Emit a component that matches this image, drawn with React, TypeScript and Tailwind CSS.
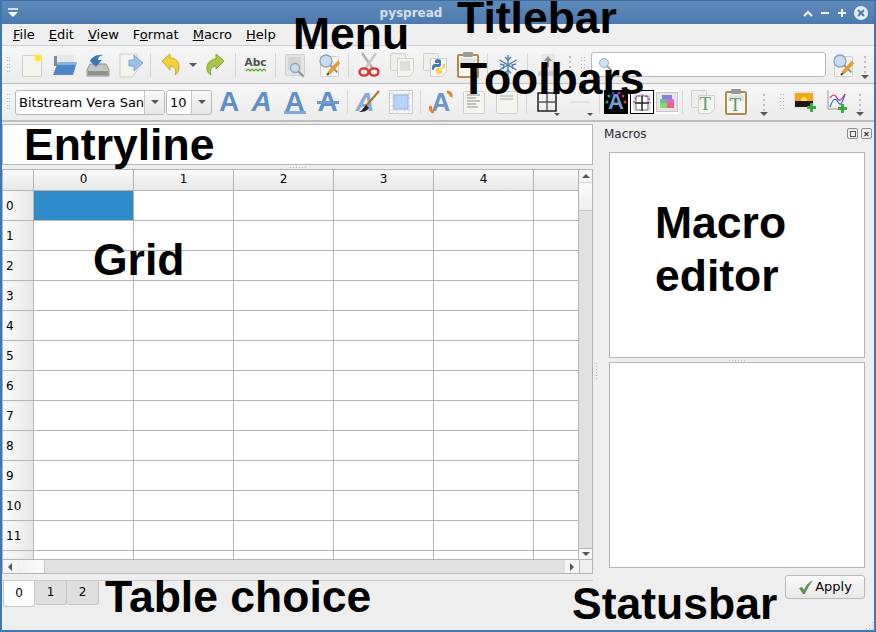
import type { ReactNode } from 'react';

const SANS = "font-['DejaVu_Sans',sans-serif]";

const Svg = ({ children, w = 24, h = 24 }: { children: ReactNode; w?: number; h?: number }) => (
  <svg width={w} height={h} viewBox={`0 0 ${w} ${h}`} fill="none">
    {children}
  </svg>
);

// plain sheet of paper, used by most of the document icons
const Sheet = ({ x = 3, y = 1, w = 18, h = 22, fill = '#f4f4f1' }: { x?: number; y?: number; w?: number; h?: number; fill?: string }) => (
  <rect x={x + 0.5} y={y + 0.5} width={w} height={h} rx="1" fill={fill} stroke="#cfcfcb" />
);

const Lens = ({ x, y, r = 5 }: { x: number; y: number; r?: number }) => (
  <g>
    <line x1={x + r * 0.7} y1={y + r * 0.7} x2={x + r * 1.9} y2={y + r * 1.9} stroke="#8a8f94" strokeWidth="2" />
    <circle cx={x} cy={y} r={r} fill="#c8dcf2" stroke="#8fa3b8" strokeWidth="1.3" />
  </g>
);

const Pencil = ({ x, y }: { x: number; y: number }) => (
  <g>
    <line x1={x + 12} y1={y} x2={x + 2} y2={y + 11} stroke="#e89a2c" strokeWidth="3.4" />
    <line x1={x + 2} y1={y + 11} x2={x} y2={y + 13} stroke="#5a4630" strokeWidth="2" />
  </g>
);

const NewIcon = () => (
  <Svg>
    <Sheet x={2} y={2} w={19} h={21} />
    <circle cx="18" cy="5" r="5" fill="#fff27a" opacity="0.5" />
    <circle cx="18" cy="5" r="3" fill="#f9e33a" />
  </Svg>
);
const OpenIcon = () => (
  <Svg w={26} h={24}>
    <path d="M2 3h9l2 2h8v8H2z" fill="#7c8c9c" />
    <path d="M5 2h17v9H5z" fill="#e8e8e6" />
    <path d="M6 9h19l-4 13H1z" fill="#4d87c7" />
    <path d="M6 9h19l-1 3H5z" fill="#86b4e4" />
  </Svg>
);
const SaveIcon = () => (
  <Svg w={24} h={26}>
    <path d="M4 12h16l3 6v6H1v-6z" fill="#c4c6c4" stroke="#8f918f" />
    <rect x="2" y="19" width="20" height="4" fill="#8f918f" />
    <path d="M3 11c2-6 8-9 14-8-4 1-5 3-5 5h4l-6 7-6-6z" fill="#3f78b8" />
  </Svg>
);
const ExportIcon = () => (
  <Svg w={26} h={26}>
    <path d="M2 2h17v17l-5 6H2z" fill="#f4f4f1" stroke="#cfcfcb" />
    <path d="M11 8h5V3l9 8-9 8v-5h-5z" fill="#9cc0e8" stroke="#7ea4d0" />
  </Svg>
);
const UndoIcon = () => (
  <Svg w={19} h={24}>
    <path d="M1 8l8-7v4c6 0 9 4 9 9 0 4-2 7-4 8 2-5 0-9-5-9v4z" fill="#f2d23c" stroke="#cfa41c" />
  </Svg>
);
const RedoIcon = () => (
  <Svg w={19} h={24}>
    <path d="M18 8l-8-7v5C5 6 1 10 1 15c0 4 2 6 4 7-2-5 1-9 5-9v3z" fill="#a8c648" stroke="#84a02c" />
  </Svg>
);
const SpellIcon = () => (
  <div className="relative flex h-[24px] w-[22px] flex-col items-center">
    <span className={`${SANS} mt-[3px] text-[10.500px] leading-[12px] font-bold text-[#4c524c]`}>Abc</span>
    <svg width="22" height="4" viewBox="0 0 22 4" fill="none">
      <path d="M1 3l2-2 2 2 2-2 2 2 2-2 2 2 2-2 2 2 2-2 2 2" stroke="#5aa828" strokeWidth="1.2" />
    </svg>
  </div>
);
const PreviewIcon = () => (
  <Svg>
    <Sheet x={1} y={1} w={19} h={21} fill="#e4e4e2" />
    <rect x="4" y="4" width="13" height="13" fill="#d4d4d2" />
    <Lens x={11} y={15} r={4.5} />
  </Svg>
);
const FindIcon = () => (
  <Svg w={24} h={24}>
    <Sheet x={3} y={3} w={18} h={20} />
    <Lens x={9} y={8} r={6} />
    <Pencil x={10} y={9} />
  </Svg>
);
const CutIcon = () => (
  <Svg w={22} h={26}>
    <line x1="4" y1="1" x2="15" y2="17" stroke="#b0b2b0" strokeWidth="2.5" />
    <line x1="18" y1="1" x2="7" y2="17" stroke="#c6c8c6" strokeWidth="2.5" />
    <ellipse cx="6" cy="20" rx="4.5" ry="3.6" stroke="#d8322c" strokeWidth="2.4" />
    <ellipse cx="16" cy="20" rx="4.5" ry="3.6" stroke="#d8322c" strokeWidth="2.4" />
  </Svg>
);
const CopyIcon = ({ children }: { children?: ReactNode }) => (
  <Svg w={24} h={24}>
    <Sheet x={0} y={0} w={15} h={17} fill="#efefec" />
    <path d="M7.5 5.5h16v13l-4 5h-12z" fill="#f4f4f1" stroke="#cfcfcb" />
    {children ?? <rect x="10" y="8" width="10" height="10" fill="#dddddb" />}
  </Svg>
);
const PythonIcon = () => (
  <Svg w={24} h={24}>
    <Sheet x={0} y={0} w={15} h={17} fill="#efefec" />
    <path d="M7.5 5.5h16v13l-4 5h-12z" fill="#f4f4f1" stroke="#cfcfcb" />
    <path d="M9 15c0-3 1-4 3-4h4V10h-4V8c0-1 1-2 3-2s3 1 3 2v4c0 1-1 2-2 2h-3c-1 0-2 1-2 2v1h-1c-1 0-1-1-1-2z" fill="#3f7cb4" />
    <path d="M22 12c0 3-1 4-3 4h-3v1h3v2c0 1-1 2-3 2s-3-1-3-2v-3c0-1 1-1 2-1h3c1 0 2-1 2-2v-2h1c1 0 1 0 1 1z" fill="#f6cf3c" />
  </Svg>
);
const PasteIcon = () => (
  <Svg w={22} h={26}>
    <rect x="1" y="3" width="20" height="22" rx="1" stroke="#b58a48" strokeWidth="2" fill="#f6f6f3" />
    <rect x="6" y="0" width="10" height="5" rx="1" fill="#9a9a98" />
    <rect x="3" y="6" width="16" height="6" fill="#e2e2df" />
  </Svg>
);
const FreezeIcon = () => (
  <Svg w={20} h={22}>
    <g stroke="#4f7fb4" strokeWidth="1.4">
      <line x1="10" y1="1" x2="10" y2="21" />
      <line x1="1.500" y1="6" x2="18.500" y2="16" />
      <line x1="18.500" y1="6" x2="1.500" y2="16" />
      <path d="M7 3l3 3 3-3M7 19l3-3 3 3M2 10l4 1-1 4M18 10l-4 1 1 4" />
    </g>
  </Svg>
);
const SortIcon = () => (
  <Svg w={20} h={24}>
    <rect x="3" y="1" width="14" height="17" fill="#e6e6e4" />
    <path d="M10 3l4 5h-3v6H9V8H6z" fill="#8f918f" />
    <rect x="0" y="18" width="20" height="5" rx="1" fill="#c9cac8" />
  </Svg>
);
// letter icons are real text: bold blue A with the variant on top
const LetterA = ({ className = '', line }: { className?: string; line?: 'under' | 'strike' }) => (
  <div className="relative flex h-[24px] w-[24px] items-center justify-center">
    <span className={`font-['Liberation_Sans',sans-serif] text-[28px] leading-[24px] font-bold text-[#5f8fc8] ${className}`}>A</span>
    {line === 'under' && <div className="absolute top-[21px] left-[1px] h-[3px] w-[22px] bg-[#7ea6d6]" />}
    {line === 'strike' && <div className="absolute top-[11px] left-[1px] h-[3px] w-[22px] bg-[#6f9ad0]" />}
  </div>
);
const BrushIcon = () => (
  <div className="relative h-[24px] w-[24px]">
    <span className="absolute top-0 left-0 font-['Liberation_Sans',sans-serif] text-[26px] leading-[24px] font-bold text-[#8aaad2] italic">A</span>
    <svg className="absolute inset-0" width="24" height="24" viewBox="0 0 24 24" fill="none">
      <line x1="23" y1="1" x2="10" y2="16" stroke="#a8742c" strokeWidth="2" />
      <path d="M10 15l3 3c-2 3-5 4-10 4 3-1 4-4 7-7z" fill="#26231f" />
    </svg>
  </div>
);
const BgIcon = () => (
  <Svg>
    <rect x="0.500" y="0.500" width="23" height="23" fill="#fff" stroke="#c6c6c6" />
    <path d="M4 0v24M8 0v24M16 0v24M20 0v24M0 4h24M0 8h24M0 16h24M0 20h24" stroke="#d8d8d8" />
    <rect x="5" y="5" width="14" height="14" fill="#b8d4fa" stroke="#94b4e0" />
  </Svg>
);
const RotateIcon = () => (
  <div className="relative h-[24px] w-[24px]">
    <span className="absolute top-0 left-[3px] font-['Liberation_Sans',sans-serif] text-[26px] leading-[24px] font-bold text-[#6a96cc]">A</span>
    <svg className="absolute inset-0" width="24" height="24" viewBox="0 0 24 24" fill="none">
      <path d="M18 2a4 4 0 0 1 4 5M2 16a4 4 0 0 0 3 6" stroke="#e0802a" strokeWidth="3" />
    </svg>
  </div>
);
const TextPage = ({ top }: { top?: boolean }) => (
  <Svg>
    <Sheet x={1} y={1} w={21} h={22} />
    {top ? (
      <path d="M5 6h13M5 9h13" stroke="#a6a6a4" />
    ) : (
      <path d="M5 5h13M5 8h9M5 11h13M5 14h9M5 17h11" stroke="#8c8c8a" />
    )}
  </Svg>
);
const BorderIcon = () => (
  <Svg w={20} h={20}>
    <rect x="1" y="1" width="18" height="18" stroke="#111" strokeWidth="1.400" />
    <path d="M10 1v18M1 10h18" stroke="#555" strokeWidth="1.400" />
  </Svg>
);
const TextColor = () => (
  <div className="relative flex h-[24px] w-[24px] items-center justify-center bg-black">
    <span className="font-['Liberation_Sans',sans-serif] text-[22px] leading-[24px] font-bold text-[#6f9bdc]">A</span>
    <svg className="absolute inset-0" width="24" height="24" viewBox="0 0 24 24" fill="none">
      <circle cx="3" cy="12" r="1.500" fill="#22c022" />
      <circle cx="5" cy="6" r="1.500" fill="#22a0d0" />
      <circle cx="9" cy="3" r="1.500" fill="#3040e0" />
      <circle cx="15" cy="3" r="1.500" fill="#a030c0" />
      <circle cx="19" cy="6" r="1.500" fill="#e03060" />
      <circle cx="21" cy="12" r="1.500" fill="#e04020" />
    </svg>
  </div>
);
const LineColor = () => (
  <Svg>
    <rect x="0.500" y="0.500" width="23" height="23" fill="#fff" stroke="#000" />
    <path d="M4 4v17M20 4v17" stroke="#c8c8c8" strokeWidth="1" />
    <path d="M12 6v15M5 13h14" stroke="#222" strokeWidth="1.500" />
    <rect x="6" y="6" width="12" height="14" stroke="#444" strokeWidth="0.800" />
    <path d="M4 13A8 8 0 0 1 20 13" stroke="#b050d0" strokeWidth="1.500" strokeDasharray="2 2" />
  </Svg>
);
const BgColor = () => (
  <Svg>
    <rect x="0" y="0" width="24" height="24" fill="#fff" />
    <rect x="1.500" y="2.500" width="21" height="19" fill="#e6e6e6" stroke="#c6c6c6" />
    <rect x="7" y="5" width="10" height="4" fill="#8a80d8" />
    <rect x="5" y="9" width="6" height="4" fill="#60c0a0" />
    <rect x="11" y="9" width="8" height="4" fill="#d070d0" />
    <rect x="5" y="13" width="7" height="5" fill="#80e060" />
    <rect x="12" y="13" width="7" height="5" fill="#f06080" />
  </Svg>
);
const CopyT = () => (
  <div className="relative h-[24px] w-[24px]">
    <CopyIcon>
      <g />
    </CopyIcon>
    <span className="absolute top-[5px] left-[9px] font-['Liberation_Serif',serif] text-[19px] leading-[18px] text-[#5f9478]">T</span>
  </div>
);
const PasteT = () => (
  <div className="relative h-[26px] w-[22px]">
    <PasteIcon />
    <span className="absolute top-[7px] left-[5px] font-['Liberation_Serif',serif] text-[19px] leading-[18px] text-[#5f9478]">T</span>
  </div>
);
const ImageIcon = () => (
  <Svg w={24} h={24}>
    <rect x="0" y="1" width="22" height="18" fill="#e8e8e4" />
    <rect x="2" y="3" width="18" height="8" fill="#f0a818" />
    <circle cx="11" cy="10" r="3" fill="#ffe060" />
    <rect x="2" y="11" width="18" height="6" fill="#201810" />
    <path d="M17 13h3v3h3v3h-3v3h-3v-3h-3v-3h3z" fill="#3ea83e" />
  </Svg>
);
const ChartIcon = () => (
  <Svg w={22} h={24}>
    <path d="M1 0v19h17" stroke="#9a9a98" />
    <path d="M3 17c3-8 5-10 8-5s4 1 7-8" stroke="#2c6cd8" strokeWidth="1.200" />
    <path d="M3 8c3-4 5-4 7 0s5 2 8-4" stroke="#d02870" strokeWidth="1.200" />
    <path d="M14 14h3v3h3v3h-3v3h-3v-3h-3v-3h3z" fill="#3ea83e" />
  </Svg>
);

const Tool = ({ children, className = 'w-[33px]' }: { children: ReactNode; className?: string }) => (
  <div className={`flex h-full shrink-0 items-center justify-center ${className}`}>{children}</div>
);
const Sep = () => (
  <div className="flex h-full w-[7px] shrink-0 items-center justify-center">
    <div className="h-[24px] w-px bg-[#d6d6d6]" />
  </div>
);
const Grip = ({ className = 'w-[13px]' }: { className?: string }) => (
  <div className={`flex h-full shrink-0 items-center justify-center ${className}`}>
    <div className="grid h-[16px] w-[4px] grid-cols-2 gap-x-[1px] gap-y-[2px]">
      {Array.from({ length: 10 }).map((_, i) => (
        <div key={i} className="h-px w-px bg-[#b4b4b4]" />
      ))}
    </div>
  </div>
);
// the overflow handle on the end of a toolbar: dots with a small arrow under them
const More = ({ className = 'w-[12px]' }: { className?: string }) => (
  <div className={`relative flex h-full shrink-0 flex-col items-center pt-[10px] ${className}`}>
    <div className="flex flex-col gap-[3px]">
      {[0, 1, 2, 3].map((i) => (
        <div key={i} className="h-[2px] w-[2px] bg-[#bcbcbc]" />
      ))}
    </div>
    <div className="absolute bottom-[4px] h-0 w-0 border-x-[4px] border-t-[4px] border-x-transparent border-t-[#555]" />
  </div>
);
const Combo = ({ text, className }: { text: string; className: string }) => (
  <div className={`flex h-[25px] shrink-0 overflow-hidden rounded-[3px] border border-[#b8b8b8] bg-white ${className}`}>
    <div className={`${SANS} flex-1 overflow-hidden pl-[3px] text-[13px] leading-[23px] whitespace-nowrap text-black`}>{text}</div>
    <div className="flex w-[20px] shrink-0 items-center justify-center border-l border-[#c6c6c6] bg-gradient-to-b from-[#f8f8f8] to-[#e6e6e6]">
      <div className="h-0 w-0 border-x-[4px] border-t-[4px] border-x-transparent border-t-[#555]" />
    </div>
  </div>
);

const Toolbar1 = () => (
  <div className="flex h-[38px] shrink-0 items-center border-b border-[#bdbdbd] bg-gradient-to-b from-[#f6f6f6] to-[#ececec]">
    <Grip />
    <Tool><NewIcon /></Tool>
    <Tool><OpenIcon /></Tool>
    <Tool><SaveIcon /></Tool>
    <Tool><ExportIcon /></Tool>
    <Sep />
    <Tool><UndoIcon /></Tool>
    <Tool className="w-[12px]">
      <div className="h-0 w-0 border-x-[4px] border-t-[4px] border-x-transparent border-t-[#555]" />
    </Tool>
    <Tool><RedoIcon /></Tool>
    <Sep />
    <Tool><SpellIcon /></Tool>
    <Sep />
    <Tool><PreviewIcon /></Tool>
    <Tool><FindIcon /></Tool>
    <Sep />
    <Tool><CutIcon /></Tool>
    <Tool><CopyIcon /></Tool>
    <Tool><PythonIcon /></Tool>
    <Tool><PasteIcon /></Tool>
    <Sep />
    <Tool><FreezeIcon /></Tool>
    <Sep />
    <Tool><SortIcon /></Tool>
    <More className="w-[11px]" />
    <Grip className="w-[16px]" />
    <div className="flex h-[25px] w-[235px] shrink-0 items-center rounded-[3px] border border-[#b8b8b8] bg-white pl-[6px]">
      <svg width="16" height="16" viewBox="0 0 16 16" fill="none">
        <line x1="9" y1="9" x2="14" y2="14" stroke="#a0a0a0" strokeWidth="2" />
        <circle cx="6" cy="6" r="4.500" fill="#cfe0f4" stroke="#9ab0c8" />
      </svg>
    </div>
    <Tool><FindIcon /></Tool>
    <More />
  </div>
);

const Toolbar2 = () => (
  <div className="flex h-[38px] shrink-0 items-center border-b-2 border-[#bdbdbd] bg-gradient-to-b from-[#f6f6f6] to-[#ececec]">
    <Grip />
    <Combo text="Bitstream Vera Sans" className="w-[150px]" />
    <Combo text="10" className="ml-px w-[46px]" />
    <Tool className="w-[33px] pl-px"><LetterA /></Tool>
    <Tool><LetterA className="italic" /></Tool>
    <Tool><LetterA line="under" /></Tool>
    <Tool><LetterA line="strike" /></Tool>
    <Sep />
    <Tool><BrushIcon /></Tool>
    <Tool><BgIcon /></Tool>
    <Sep />
    <Tool><RotateIcon /></Tool>
    <Tool><TextPage /></Tool>
    <Tool><TextPage top /></Tool>
    <Sep />
    <Tool className="relative w-[33px]">
      <BorderIcon />
      <div className="absolute right-[3px] bottom-[4px] h-0 w-0 border-x-[3px] border-t-[3px] border-x-transparent border-t-[#555]" />
    </Tool>
    <Tool className="relative w-[33px]">
      <div className="h-[2px] w-[20px] bg-[#e2e2e2]" />
      <div className="absolute right-[3px] bottom-[4px] h-0 w-0 border-x-[3px] border-t-[3px] border-x-transparent border-t-[#555]" />
    </Tool>
    <Sep />
    <Tool className="w-[26px]"><TextColor /></Tool>
    <Tool className="w-[25px]"><LineColor /></Tool>
    <Tool className="w-[25px]"><BgColor /></Tool>
    <Sep />
    <Tool><CopyT /></Tool>
    <Tool><PasteT /></Tool>
    <More className="w-[24px]" />
    <Grip className="w-[12px]" />
    <Tool className="w-[33px]"><ImageIcon /></Tool>
    <Tool><ChartIcon /></Tool>
    <More className="w-[12px]" />
  </div>
);

const COLS = [0, 1, 2, 3, 4];
const ROWS = [0, 1, 2, 3, 4, 5, 6, 7, 8, 9, 10, 11, 12];

const Grid = () => (
  <div className="flex h-[405px] shrink-0 flex-col border border-[#b4b4b4] bg-white">
    <div className="flex min-h-0 flex-1">
      <div className="min-w-0 flex-1 overflow-hidden">
        <div className={`${SANS} flex h-[21px] border-b border-[#b4b4b4] bg-gradient-to-b from-[#fafafa] to-[#e8e8e8] text-[12px] leading-[19px] text-black`}>
          <div className="w-[31px] shrink-0 border-r border-[#b4b4b4]" />
          {COLS.map((c) => (
            <div key={c} className="w-[100px] shrink-0 border-r border-[#b4b4b4] text-center">{c}</div>
          ))}
        </div>
        {ROWS.map((r) => (
          <div key={r} className="flex h-[30px] border-b border-[#b4b4b4]">
            <div className={`${SANS} w-[31px] shrink-0 border-r border-[#b4b4b4] bg-gradient-to-r from-[#fafafa] to-[#e8e8e8] pl-[3px] text-[12px] leading-[31px] text-black`}>
              {r === 12 ? '' : r}
            </div>
            {COLS.map((c) => (
              <div key={c} className={`w-[100px] shrink-0 border-r border-[#b4b4b4] ${r === 0 && c === 0 ? 'bg-[#2e8bc8]' : ''}`} />
            ))}
          </div>
        ))}
      </div>
      <div className="flex w-[14px] shrink-0 flex-col border-l border-[#b4b4b4]">
        <div className="flex h-[13px] items-center justify-center border-b border-[#d8d8d8] bg-[#f6f6f6]">
          <div className="h-0 w-0 border-x-[4px] border-b-[4px] border-x-transparent border-b-[#555]" />
        </div>
        <div className="h-[28px] border-b border-[#c6c6c6] bg-gradient-to-b from-[#fafafa] to-[#efefef]" />
        <div className="flex-1 bg-[#e1e1e1]" />
        <div className="flex h-[11px] items-center justify-center border-t border-[#b4b4b4] bg-[#f6f6f6]">
          <div className="h-0 w-0 border-x-[4px] border-t-[4px] border-x-transparent border-t-[#555]" />
        </div>
      </div>
    </div>
    <div className="flex h-[14px] shrink-0 border-t border-[#b4b4b4]">
      <div className="flex w-[14px] shrink-0 items-center justify-center bg-[#f6f6f6]">
        <div className="h-0 w-0 border-y-[4px] border-r-[4px] border-y-transparent border-r-[#555]" />
      </div>
      <div className="w-[28px] shrink-0 border-r border-[#c6c6c6] bg-gradient-to-r from-[#f0f0f0] to-[#fafafa]" />
      <div className="flex-1 bg-[#e1e1e1]" />
      <div className="flex w-[14px] shrink-0 items-center justify-center bg-[#f6f6f6]">
        <div className="h-0 w-0 border-y-[4px] border-l-[4px] border-y-transparent border-l-[#555]" />
      </div>
      <div className="w-[13px] shrink-0 border-l border-[#b4b4b4] bg-[#efefef]" />
    </div>
  </div>
);

const Tabs = () => (
  <div className="mt-[6px] flex border-t border-[#c8c8c8] pl-px">
    <div className={`${SANS} h-[26px] w-[32px] rounded-b-[3px] border-x border-b border-[#c4c4c4] bg-white text-center text-[12px] leading-[25px] text-black`}>0</div>
    {[1, 2].map((t) => (
      <div key={t} className={`${SANS} h-[24px] w-[32px] rounded-b-[3px] border-r border-b border-[#c4c4c4] bg-[#dedede] text-center text-[12px] leading-[23px] text-black`}>{t}</div>
    ))}
  </div>
);

const Dots = () => (
  <div className="flex h-[4px] items-center justify-center gap-[2px]">
    {[0, 1, 2, 3, 4, 5].map((i) => (
      <div key={i} className="h-px w-px bg-[#b0b0b0]" />
    ))}
  </div>
);

const Dock = () => (
  <div className="flex min-w-0 flex-1 flex-col">
    <div className="flex h-[26px] shrink-0 items-center pb-[3px] pl-[4px]">
      <span className={`${SANS} flex-1 text-[12px] text-[#1f2a33]`}>Macros</span>
      <div className="mr-[3px] flex h-[11px] w-[11px] items-center justify-center rounded-[2px] border border-[#8c8c8c]">
        <div className="h-[6px] w-[6px] border border-[#555]" />
      </div>
      <div className="mr-[2px] flex h-[11px] w-[11px] items-center justify-center rounded-[2px] border border-[#8c8c8c] text-[11px] leading-none font-bold text-[#333]">×</div>
    </div>
    <div className="mx-[9px] mt-[4px] flex flex-col">
      <div className="h-[206px] border border-[#b4b4b4] bg-white" />
      <Dots />
      <div className="h-[206px] border border-[#b4b4b4] bg-white" />
    </div>
    <div className="mr-[9px] mt-[7px] flex justify-end">
      <div className={`${SANS} flex h-[24px] w-[80px] items-center justify-center gap-[1px] rounded-[3px] border border-[#b8b8b8] bg-gradient-to-b from-[#fafafa] to-[#e8e8e8] text-[13px] text-black`}>
        <svg width="16" height="16" viewBox="0 0 16 16" fill="none">
          <path d="M1 9l3-1 2 3c2-5 5-8 9-10-3 4-6 9-8 14H5z" fill="#5f8a50" />
        </svg>
        Apply
      </div>
    </div>
  </div>
);

// large explanatory captions that lie over the screenshot
const Label = ({ className, children }: { className: string; children: ReactNode }) => (
  <div className={`absolute font-['Liberation_Sans',Arial,sans-serif] text-[44.500px] leading-[44px] font-bold whitespace-nowrap text-black ${className}`}>
    {children}
  </div>
);

export default function App() {
  return (
    <div className="relative flex h-[632px] w-[876px] flex-col overflow-hidden border-x-2 border-b-2 border-[#3c78b8] bg-[#eeeeee]">
      {/* Titlebar */}
      <div className="-mx-[2px] flex h-[24px] shrink-0 items-center border-t border-[#3c6a9c] bg-gradient-to-b from-[#5f8bbb] to-[#4d7aae] px-[7px]">
        <svg width="12" height="10" viewBox="0 0 12 10" fill="none">
          <path d="M1 1h10" stroke="#fff" strokeWidth="1.500" />
          <path d="M1 4h10L6 9z" fill="#fff" />
        </svg>
        <div className={`${SANS} flex-1 text-center text-[12px] font-bold text-[#d4e0ee]`}>pyspread</div>
        <svg width="66" height="16" viewBox="0 0 66 16" fill="none" stroke="#f4f8fb" strokeWidth="2">
          <path d="M1 11l4-4 4 4" />
          <path d="M18 8h8" />
          <path d="M35 8h8M39 4v8" />
          <circle cx="58" cy="8" r="7" fill="#e6eef6" stroke="none" />
          <path d="M55 5l6 6M61 5l-6 6" stroke="#4d7aae" />
        </svg>
      </div>
      {/* Menu */}
      <div className={`${SANS} flex h-[22px] shrink-0 items-center gap-[14px] border-b border-[#cfcfcf] bg-[#efefef] pl-[11px] text-[13px] text-black`}>
        <span><u>F</u>ile</span>
        <span><u>E</u>dit</span>
        <span><u>V</u>iew</span>
        <span>F<u>o</u>rmat</span>
        <span><u>M</u>acro</span>
        <span><u>H</u>elp</span>
      </div>
      <Toolbar1 />
      <Toolbar2 />
      {/* Main area */}
      <div className="flex min-h-0 flex-1">
        <div className="flex w-[591px] shrink-0 flex-col pt-[2px]">
          <div className="h-[41px] shrink-0 border border-[#b4b4b4] bg-white" />
          <Dots />
          <Grid />
          <Tabs />
        </div>
        <div className="flex w-[7px] shrink-0 items-center justify-center">
          <div className="flex flex-col gap-[2px] pb-[10px]">
            {[0, 1, 2, 3, 4, 5].map((i) => (
              <div key={i} className="h-px w-px bg-[#b0b0b0]" />
            ))}
          </div>
        </div>
        <Dock />
      </div>
      <Label className="top-[-4px] left-[455px]">Titlebar</Label>
      <Label className="top-[12px] left-[291px]">Menu</Label>
      <Label className="top-[57px] left-[458px]">Toolbars</Label>
      <Label className="top-[123px] left-[22px]">Entryline</Label>
      <Label className="top-[238px] left-[91px]">Grid</Label>
      <Label className="top-[201px] left-[653px]">Macro</Label>
      <Label className="top-[254px] left-[653px]">editor</Label>
      <Label className="top-[575px] left-[103px]">Table choice</Label>
      <Label className="top-[582px] left-[570px]">Statusbar</Label>
      {/* size grip */}
      <div className="absolute right-[1px] bottom-[1px] grid grid-cols-3 gap-[2px]">
        {[0, 1, 2, 3, 4, 5, 6, 7, 8].map((i) => (
          <div key={i} className={`h-px w-px ${[0, 1, 3].includes(i) ? '' : 'bg-[#b4b4b4]'}`} />
        ))}
      </div>
    </div>
  );
}
